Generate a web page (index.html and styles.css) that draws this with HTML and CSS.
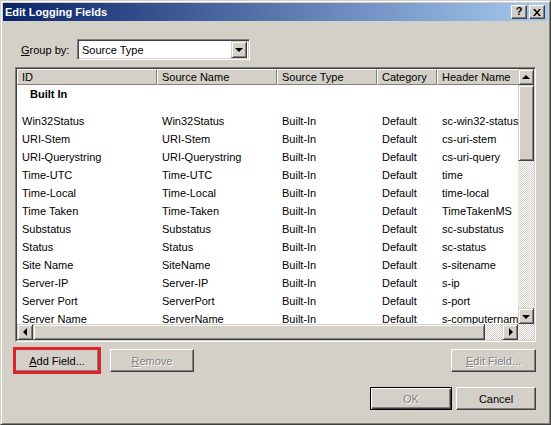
FILE: index.html
```html
<!DOCTYPE html>
<html>
<head>
<meta charset="utf-8">
<title>Edit Logging Fields</title>
<link rel="stylesheet" href="styles.css">
</head>
<body>
<div class="window">
  <div class="titlebar">
    <span class="title">Edit Logging Fields</span>
    <div class="caption-buttons">
      <span class="cap-btn help">?</span>
      <span class="cap-btn close">
        <svg width="8" height="7" viewBox="0 0 8 7"><path d="M0 0h2l2 2.5L6 0h2L5 3.5 8 7H6L4 4.5 2 7H0l3-3.5z" fill="#000"/></svg>
      </span>
    </div>
  </div>
  <div class="body">
    <div class="group-row">
      <span class="label"><u>G</u>roup by:</span>
      <div class="combo">
        <span class="combo-text">Source Type</span>
        <span class="combo-btn"><span class="arrow down"></span></span>
      </div>
    </div>
    <div class="list">
      <div class="view">
        <div class="header">
          <div class="hcell c1">ID</div>
          <div class="hcell c2">Source Name</div>
          <div class="hcell c3">Source Type</div>
          <div class="hcell c4">Category</div>
          <div class="hcell c5">Header Name</div>
        </div>
        <div class="group">Built In</div>
        <div class="row"><span class="cell c1">Win32Status</span><span class="cell c2">Win32Status</span><span class="cell c3">Built-In</span><span class="cell c4">Default</span><span class="cell c5">sc-win32-status</span></div>
        <div class="row"><span class="cell c1">URI-Stem</span><span class="cell c2">URI-Stem</span><span class="cell c3">Built-In</span><span class="cell c4">Default</span><span class="cell c5">cs-uri-stem</span></div>
        <div class="row"><span class="cell c1">URI-Querystring</span><span class="cell c2">URI-Querystring</span><span class="cell c3">Built-In</span><span class="cell c4">Default</span><span class="cell c5">cs-uri-query</span></div>
        <div class="row"><span class="cell c1">Time-UTC</span><span class="cell c2">Time-UTC</span><span class="cell c3">Built-In</span><span class="cell c4">Default</span><span class="cell c5">time</span></div>
        <div class="row"><span class="cell c1">Time-Local</span><span class="cell c2">Time-Local</span><span class="cell c3">Built-In</span><span class="cell c4">Default</span><span class="cell c5">time-local</span></div>
        <div class="row"><span class="cell c1">Time Taken</span><span class="cell c2">Time-Taken</span><span class="cell c3">Built-In</span><span class="cell c4">Default</span><span class="cell c5">TimeTakenMS</span></div>
        <div class="row"><span class="cell c1">Substatus</span><span class="cell c2">Substatus</span><span class="cell c3">Built-In</span><span class="cell c4">Default</span><span class="cell c5">sc-substatus</span></div>
        <div class="row"><span class="cell c1">Status</span><span class="cell c2">Status</span><span class="cell c3">Built-In</span><span class="cell c4">Default</span><span class="cell c5">sc-status</span></div>
        <div class="row"><span class="cell c1">Site Name</span><span class="cell c2">SiteName</span><span class="cell c3">Built-In</span><span class="cell c4">Default</span><span class="cell c5">s-sitename</span></div>
        <div class="row"><span class="cell c1">Server-IP</span><span class="cell c2">Server-IP</span><span class="cell c3">Built-In</span><span class="cell c4">Default</span><span class="cell c5">s-ip</span></div>
        <div class="row"><span class="cell c1">Server Port</span><span class="cell c2">ServerPort</span><span class="cell c3">Built-In</span><span class="cell c4">Default</span><span class="cell c5">s-port</span></div>
        <div class="row"><span class="cell c1">Server Name</span><span class="cell c2">ServerName</span><span class="cell c3">Built-In</span><span class="cell c4">Default</span><span class="cell c5">s-computername</span></div>
      </div>
      <div class="vscroll">
        <span class="sb-btn"><span class="arrow up"></span></span>
        <span class="thumb v"></span>
        <span class="track"></span>
        <span class="sb-btn"><span class="arrow down"></span></span>
      </div>
      <div class="hscroll">
        <span class="sb-btn"><span class="arrow left"></span></span>
        <span class="thumb h"></span>
        <span class="track"></span>
        <span class="sb-btn"><span class="arrow right"></span></span>
      </div>
      <div class="corner"></div>
    </div>
    <div class="btn-row">
      <button class="btn highlighted"><u>A</u>dd Field...</button>
      <button class="btn disabled"><u>R</u>emove</button>
      <span class="spacer"></span>
      <button class="btn disabled edit"><u>E</u>dit Field...</button>
    </div>
    <div class="btn-row bottom">
      <span class="spacer"></span>
      <button class="btn disabled default">OK</button>
      <button class="btn cancel">Cancel</button>
    </div>
  </div>
</div>
</body>
</html>
```

FILE: styles.css
```css
html, body {
  margin: 0;
  padding: 0;
  background: #d4d0c8;
}

body {
  font-family: "Liberation Sans", Arial, sans-serif;
  font-size: 11px;
  color: #000;
}

.window {
  box-sizing: border-box;
  width: 551px;
  height: 425px;
  background: #d4d0c8;
  border: 1px solid;
  border-color: #d4d0c8 #404040 #404040 #d4d0c8;
  box-shadow: inset 1px 1px #fff, inset -1px -1px #808080;
  padding: 2px;
  display: flex;
  flex-direction: column;
}

.titlebar {
  height: 18px;
  background: linear-gradient(to right, #0a246a, #a6caf0);
  display: flex;
  align-items: center;
  justify-content: space-between;
  padding: 0 3px 0 2px;
}

.title {
  color: #fff;
  font-weight: bold;
  font-size: 11px;
  letter-spacing: 0;
}

.caption-buttons {
  display: flex;
  gap: 2px;
}

.cap-btn {
  box-sizing: border-box;
  width: 16px;
  height: 14px;
  background: #d4d0c8;
  border: 1px solid;
  border-color: #fff #404040 #404040 #fff;
  box-shadow: inset -1px -1px #808080;
  display: flex;
  align-items: center;
  justify-content: center;
}

.cap-btn.help {
  font-weight: bold;
  font-size: 11px;
  line-height: 1;
  padding-bottom: 1px;
}

.body {
  flex: 1;
  padding: 18px 12px 0 12px;
  display: flex;
  flex-direction: column;
}

.group-row {
  display: flex;
  align-items: center;
  height: 21px;
  margin-bottom: 7px;
}

.label {
  margin-left: 6px;
  width: 56px;
}

.combo {
  box-sizing: border-box;
  width: 173px;
  height: 21px;
  background: #fff;
  border: 1px solid;
  border-color: #808080 #fff #fff #808080;
  box-shadow: inset 1px 1px #404040, inset -1px -1px #d4d0c8;
  padding: 2px;
  display: flex;
  align-items: center;
}

.combo-text {
  flex: 1;
  padding-left: 2px;
}

.combo-btn,
.sb-btn {
  box-sizing: border-box;
  width: 16px;
  height: 16px;
  flex: none;
  background: #d4d0c8;
  border: 1px solid;
  border-color: #d4d0c8 #404040 #404040 #d4d0c8;
  box-shadow: inset 1px 1px #fff, inset -1px -1px #808080;
  display: flex;
  align-items: center;
  justify-content: center;
}

.combo-btn {
  height: 17px;
}

.arrow {
  width: 0;
  height: 0;
  border: 4px solid transparent;
}

.arrow.down {
  border-top: 4px solid #000;
  border-bottom-width: 0;
  margin-top: 1px;
}

.arrow.up {
  border-bottom: 4px solid #000;
  border-top-width: 0;
}

.arrow.left {
  border-right: 4px solid #000;
  border-left-width: 0;
}

.arrow.right {
  border-left: 4px solid #000;
  border-right-width: 0;
  margin-left: 1px;
}

.list {
  box-sizing: border-box;
  height: 275px;
  border: 1px solid;
  border-color: #808080 #fff #fff #808080;
  box-shadow: inset 1px 1px #404040, inset -1px -1px #d4d0c8;
  padding: 1px;
  display: grid;
  grid-template-columns: 1fr 16px;
  grid-template-rows: 1fr 16px;
}

.view {
  background: #fff;
  overflow: hidden;
  min-width: 0;
}

.header {
  display: flex;
  height: 16px;
  white-space: nowrap;
}

.hcell {
  box-sizing: border-box;
  flex: none;
  height: 16px;
  background: #d4d0c8;
  border: 1px solid;
  border-color: #fff #808080 #808080 #fff;
  padding-left: 4px;
  line-height: 14px;
}

.c1 { width: 140px; }
.c2 { width: 120px; }
.c3 { width: 100px; }
.c4 { width: 60px; }
.c5 { width: 110px; }

.group {
  height: 18px;
  line-height: 18px;
  padding-left: 13px;
  font-weight: bold;
  margin-bottom: 9px;
}

.row {
  display: flex;
  height: 18px;
  line-height: 18px;
  white-space: nowrap;
}

.cell {
  box-sizing: border-box;
  flex: none;
  padding-left: 5px;
  overflow: hidden;
}

.vscroll {
  display: flex;
  flex-direction: column;
}

.hscroll {
  display: flex;
}

.thumb {
  box-sizing: border-box;
  flex: none;
  background: #d4d0c8;
  border: 1px solid;
  border-color: #d4d0c8 #404040 #404040 #d4d0c8;
  box-shadow: inset 1px 1px #fff, inset -1px -1px #808080;
}

.thumb.v {
  height: 76px;
}

.thumb.h {
  width: 452px;
}

.track,
.corner {
  flex: 1;
  background: repeating-conic-gradient(#d4d0c8 0 25%, #fff 0 50%) 0 0 / 2px 2px;
}

.btn-row {
  display: flex;
  gap: 11px;
  margin-top: 7px;
}

.btn-row.bottom {
  margin-top: 15px;
  gap: 4px;
}

.spacer {
  flex: 1;
}

.btn {
  box-sizing: border-box;
  width: 84px;
  height: 23px;
  margin: 0;
  padding: 0;
  font-family: "Liberation Sans", Arial, sans-serif;
  font-size: 11px;
  color: #000;
  background: #d4d0c8;
  border: 1px solid;
  border-color: #fff #404040 #404040 #fff;
  box-shadow: inset -1px -1px #808080;
  border-radius: 0;
}

.btn.edit {
  width: 85px;
}

.btn.disabled {
  color: #808080;
  text-shadow: 1px 1px 0 #fff;
}

.btn.default {
  width: 82px;
  border: 1px solid #000;
  box-shadow: inset 1px 1px #fff, inset -1px -1px #404040, inset -2px -2px #808080;
}

.btn.cancel {
  width: 80px;
}

.btn.highlighted {
  outline: 3px solid #e0232b;
  outline-offset: -1px;
}
```
